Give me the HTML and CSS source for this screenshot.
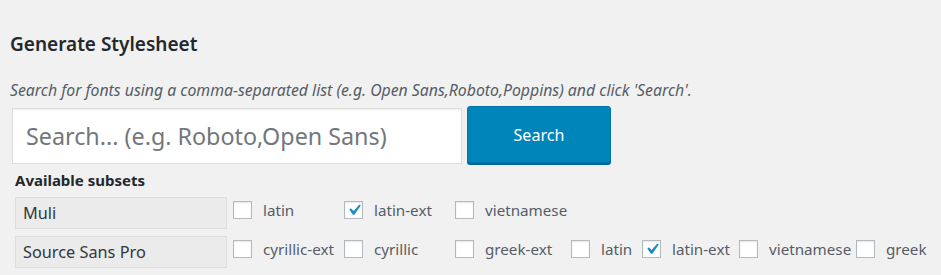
FILE: index.html
```html
<!DOCTYPE html>
<html lang="en">
<head>
  <meta charset="UTF-8">
  <title>Generate Stylesheet</title>
  <link rel="stylesheet" href="styles.css">
</head>
<body>
  <div class="wrap">
    <h2>Generate Stylesheet</h2>
    <p class="description">Search for fonts using a comma-separated list (e.g. Open Sans,Roboto,Poppins) and click 'Search'.</p>

    <div class="search-row">
      <input type="text" class="search-input" placeholder="Search... (e.g. Roboto,Open Sans)">
      <button class="button-primary">Search</button>
    </div>

    <div class="subsets-title">Available subsets</div>

    <div class="subset-row">
      <input type="text" class="font-name" value="Muli" readonly>
      <label class="opt"><span class="box"></span>latin</label>
      <label class="opt"><span class="box"><svg viewBox="0 0 20 20"><path d="M14.83 4.89l1.34.94-5.81 8.38H9.02L5.78 9.67l1.34-1.25 2.57 2.4z"/></svg></span>latin-ext</label>
      <label class="opt"><span class="box"></span>vietnamese</label>
    </div>

    <div class="subset-row">
      <input type="text" class="font-name" value="Source Sans Pro" readonly>
      <label class="opt"><span class="box"></span>cyrillic-ext</label>
      <label class="opt"><span class="box"></span>cyrillic</label>
      <label class="opt"><span class="box"></span>greek-ext</label>
      <label class="opt"><span class="box"></span>latin</label>
      <label class="opt"><span class="box"><svg viewBox="0 0 20 20"><path d="M14.83 4.89l1.34.94-5.81 8.38H9.02L5.78 9.67l1.34-1.25 2.57 2.4z"/></svg></span>latin-ext</label>
      <label class="opt"><span class="box"></span>vietnamese</label>
      <label class="opt"><span class="box"></span>greek</label>
    </div>
  </div>
</body>
</html>
```

FILE: styles.css
```css
body {
  margin: 0;
  background: #f1f1f1;
  color: #32373c;
  font-family: "Noto Sans", "Open Sans", sans-serif;
}

.wrap {
  padding: 32px 0 0 10px;
}

h2 {
  margin: 0;
  font-size: 19px;
  font-weight: 600;
  line-height: 25px;
  color: #23282d;
}

.description {
  margin: 22px 0 0;
  font-size: 15.8px;
  font-style: italic;
  line-height: 22px;
  color: #555d66;
}

.search-row {
  display: flex;
  align-items: center;
  margin: 5px 0 0 2px;
  height: 59px;
}

.search-input {
  box-sizing: border-box;
  width: 450px;
  height: 56px;
  margin: 0;
  padding: 0 13px;
  border: 1px solid #ddd;
  background: #fff;
  box-shadow: inset 0 1px 2px rgba(0,0,0,0.07);
  font-family: inherit;
  font-size: 23.3px;
  color: #32373c;
  outline: none;
}

.search-input::placeholder {
  color: #72777c;
}

.button-primary {
  box-sizing: border-box;
  width: 144px;
  height: 57px;
  margin: 0 0 0 5px;
  align-self: flex-start;
  border: 1px solid #0073aa;
  border-radius: 3px;
  background: #0085ba;
  box-shadow: 0 2px 0 #006799;
  color: #fff;
  font-family: inherit;
  font-size: 16.1px;
  cursor: pointer;
}

.subsets-title {
  margin: 5px 0 0 5px;
  font-size: 15px;
  font-weight: 700;
  line-height: 20px;
  color: #23282d;
}

.subset-row {
  display: grid;
  grid-template-columns: 218px 111px 111px 116px 71px 97px 117px auto;
  align-items: start;
  margin: 7px 0 0 5px;
}

.font-name {
  box-sizing: border-box;
  width: 212px;
  height: 32px;
  margin: 0;
  padding: 0 7px;
  border: 1px solid #ddd;
  background: #ebebeb;
  font-family: inherit;
  font-size: 16.3px;
  color: #32373c;
  outline: none;
}

.opt {
  display: flex;
  align-items: center;
  height: 25px;
  font-size: 15.2px;
  color: #555d66;
  white-space: nowrap;
}

.box {
  box-sizing: border-box;
  display: inline-flex;
  align-items: center;
  justify-content: center;
  width: 19px;
  height: 18px;
  margin-right: 11px;
  border: 1px solid #b4b9be;
  background: #fff;
  box-shadow: inset 0 1px 2px rgba(0,0,0,0.1);
}

.box svg {
  width: 22px;
  height: 22px;
  flex: none;
  fill: #1e8cbe;
}
```
